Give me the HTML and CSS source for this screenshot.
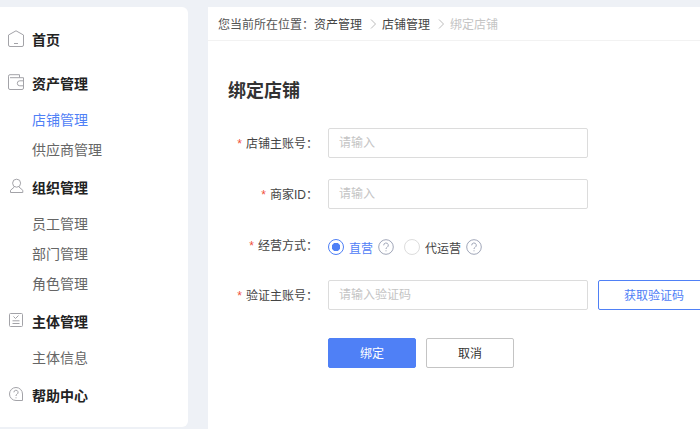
FILE: index.html
```html
<!DOCTYPE html>
<html lang="zh-CN">
<head>
<meta charset="utf-8">
<title>绑定店铺</title>
<link rel="stylesheet" href="styles.css">
</head>
<body>
<div class="app">
  <aside class="sidebar">
    <div class="nav-group nav-home">
      <div class="nav-head">
        <svg class="nav-icon" viewBox="0 0 18 18"><path d="M1.500 5 9 .8 16.500 5v10a1.500 1.500 0 0 1-1.500 1.500H3A1.500 1.500 0 0 1 1.500 15z"/><path d="M7 13.500h4"/></svg>
        <span>首页</span>
      </div>
    </div>
    <div class="nav-group">
      <div class="nav-head">
        <svg class="nav-icon" viewBox="0 0 18 18"><path d="M1.500 2.200A1.500 1.500 0 0 1 3 .7h9.500v3"/><path d="M1.500 2.200V14a1.500 1.500 0 0 0 1.500 1.500h12a1.500 1.500 0 0 0 1.500-1.500V3.700H3"/><path d="M16.500 6.800h-3.700a2.500 2.500 0 0 0 0 5h3.700"/></svg>
        <span>资产管理</span>
      </div>
      <a class="nav-item active">店铺管理</a>
      <a class="nav-item">供应商管理</a>
    </div>
    <div class="nav-group">
      <div class="nav-head">
        <svg class="nav-icon" viewBox="0 0 18 18"><circle cx="9.600" cy="5.200" r="4"/><path d="M7.300 9 3.500 12.300v2.200h12.300v-2.200L12 9"/></svg>
        <span>组织管理</span>
      </div>
      <a class="nav-item">员工管理</a>
      <a class="nav-item">部门管理</a>
      <a class="nav-item">角色管理</a>
    </div>
    <div class="nav-group">
      <div class="nav-head">
        <svg class="nav-icon" viewBox="0 0 18 18"><rect x="2.500" y="1.500" width="13" height="13" rx="1"/><path d="m6.500 4.500 2 2 3-3M5.500 8.800h7M5.500 11.500h7"/></svg>
        <span>主体管理</span>
      </div>
      <a class="nav-item">主体信息</a>
    </div>
    <div class="nav-group">
      <div class="nav-head">
        <svg class="nav-icon" viewBox="0 0 18 18"><path d="M9 1.500a6.500 6.500 0 1 0 0 13h6.500V8A6.500 6.500 0 0 0 9 1.500z"/><path d="M6.900 6.300a2.100 2.100 0 1 1 3.100 1.900C9.300 8.600 9 9 9 10"/><path d="M9 11.300v1"/></svg>
        <span>帮助中心</span>
      </div>
    </div>
  </aside>
  <main class="main">
    <nav class="crumbs">
      <span>您当前所在位置：</span><span class="crumb-link">资产管理</span>
      <svg class="crumb-sep" viewBox="0 0 8 10"><path d="m2 .5 4.500 4.500L2 9.500"/></svg>
      <span class="crumb-link">店铺管理</span>
      <svg class="crumb-sep" viewBox="0 0 8 10"><path d="m2 .5 4.500 4.500L2 9.500"/></svg>
      <span class="crumb-current">绑定店铺</span>
    </nav>
    <section class="content">
      <h1 class="title">绑定店铺</h1>
      <form class="form">
        <div class="row">
          <label class="label"><i>*</i>店铺主账号：</label>
          <input class="input" placeholder="请输入">
        </div>
        <div class="row">
          <label class="label"><i>*</i>商家ID：</label>
          <input class="input" placeholder="请输入">
        </div>
        <div class="row row-radio">
          <label class="label"><i>*</i>经营方式：</label>
          <div class="radios">
            <span class="radio on"></span><span class="radio-text on">直营</span>
            <svg class="help" viewBox="0 0 16 16"><circle cx="8" cy="8" r="7.300"/><path d="M5.700 6.300a2.300 2.300 0 1 1 3.400 2C8.300 8.800 8 9.200 8 10"/><path d="M8 11.300v1"/></svg>
            <span class="radio"></span><span class="radio-text">代运营</span>
            <svg class="help" viewBox="0 0 16 16"><circle cx="8" cy="8" r="7.300"/><path d="M5.700 6.300a2.300 2.300 0 1 1 3.400 2C8.300 8.800 8 9.200 8 10"/><path d="M8 11.300v1"/></svg>
          </div>
        </div>
        <div class="row">
          <label class="label"><i>*</i>验证主账号：</label>
          <input class="input" placeholder="请输入验证码">
          <button type="button" class="btn btn-code">获取验证码</button>
        </div>
        <div class="actions">
          <button type="button" class="btn btn-primary">绑定</button>
          <button type="button" class="btn btn-default">取消</button>
        </div>
      </form>
    </section>
  </main>
</div>
</body>
</html>
```
FILE: styles.css
```css
* { box-sizing: border-box; }
html, body { margin: 0; height: 100%; overflow: hidden; }
body {
  background: #eef1f6;
  font-family: "Liberation Sans", "Noto Sans CJK SC", sans-serif;
  font-size: 12px;
  color: #333;
}
.app { display: flex; gap: 20px; height: 429px; padding-top: 7px; }

.sidebar {
  width: 188px;
  height: 420px;
  flex: none;
  background: #fff;
  border-radius: 0 6px 6px 0;
  padding: 19px 0 0 7px;
}
.nav-group { margin-bottom: 9px; }
.nav-home { margin-bottom: 18px; }
.nav-head {
  display: flex;
  align-items: center;
  height: 26px;
  font-size: 14px;
  font-weight: 700;
  color: #222;
}
.nav-icon {
  width: 18px;
  height: 18px;
  margin-right: 7px;
  flex: none;
  fill: none;
  stroke: #a3a3a8;
  stroke-width: 1;
}
.nav-item {
  display: block;
  height: 30px;
  line-height: 30px;
  padding-left: 25px;
  font-size: 14px;
  color: #666;
}
.nav-head + .nav-item { margin-top: 9px; }
.nav-item.active { color: #4f80f6; }

.main { flex: 1; min-width: 0; background: #fff; }
.crumbs {
  display: flex;
  align-items: center;
  height: 34px;
  padding-left: 10px;
  border-bottom: 1px solid #f2f2f2;
  color: #555;
}
.crumb-link { color: #444; }
.crumb-sep {
  width: 8px;
  height: 10px;
  margin: 0 5px 0 7px;
  fill: none;
  stroke: #bbb;
  stroke-width: 1;
}
.crumb-current { color: #c4c4c4; }

.content { padding: 36px 0 0 20px; }
.title {
  margin: 0 0 24px;
  height: 27px;
  line-height: 28px;
  font-size: 18px;
  font-weight: 700;
  color: #333;
}
.row { display: flex; align-items: center; height: 30px; margin-bottom: 21px; }
.row-radio { height: 34px; margin-bottom: 16px; }
.label { flex: none; width: 90px; padding-bottom: 2px; text-align: right; color: #444; white-space: nowrap; }
.row-radio .label { padding-bottom: 6px; }
.label i { color: #f0503c; font-style: normal; margin-right: 4px; }
.input {
  flex: none;
  width: 260px;
  height: 30px;
  margin-left: 10px;
  padding: 0 10px;
  border: 1px solid #dcdcdc;
  border-radius: 2px;
  font: inherit;
  outline: none;
}
.input::placeholder { color: #c4c4c4; }

.radios { display: flex; align-items: center; margin-left: 10px; }
.radio {
  width: 16px;
  height: 16px;
  border: 1px solid #ddd;
  border-radius: 50%;
  margin-right: 5px;
}
.radio.on {
  border-color: #4f80f6;
  background: radial-gradient(circle, #4f80f6 0 4px, #fff 4.500px);
}
.radio-text { color: #444; }
.radio-text.on { color: #4f80f6; }
.help {
  width: 16px;
  height: 16px;
  margin: 0 10px 0 5px;
  fill: none;
  stroke: #a0a6b8;
  stroke-width: 1;
}
.btn {
  height: 30px;
  border-radius: 2px;
  font: inherit;
  padding: 0 0 2px;
}
.btn-code {
  width: 112px;
  margin-left: 10px;
  flex: none;
  background: #fff;
  color: #4f80f6;
  border: 1px solid #4f80f6;
}
.actions { display: flex; gap: 10px; margin: 28px 0 0 100px; }
.btn-primary { width: 88px; background: #4f80f6; color: #fff; border: 1px solid #4f80f6; }
.btn-default { width: 88px; background: #fff; color: #333; border: 1px solid #c4c4c4; }
```
